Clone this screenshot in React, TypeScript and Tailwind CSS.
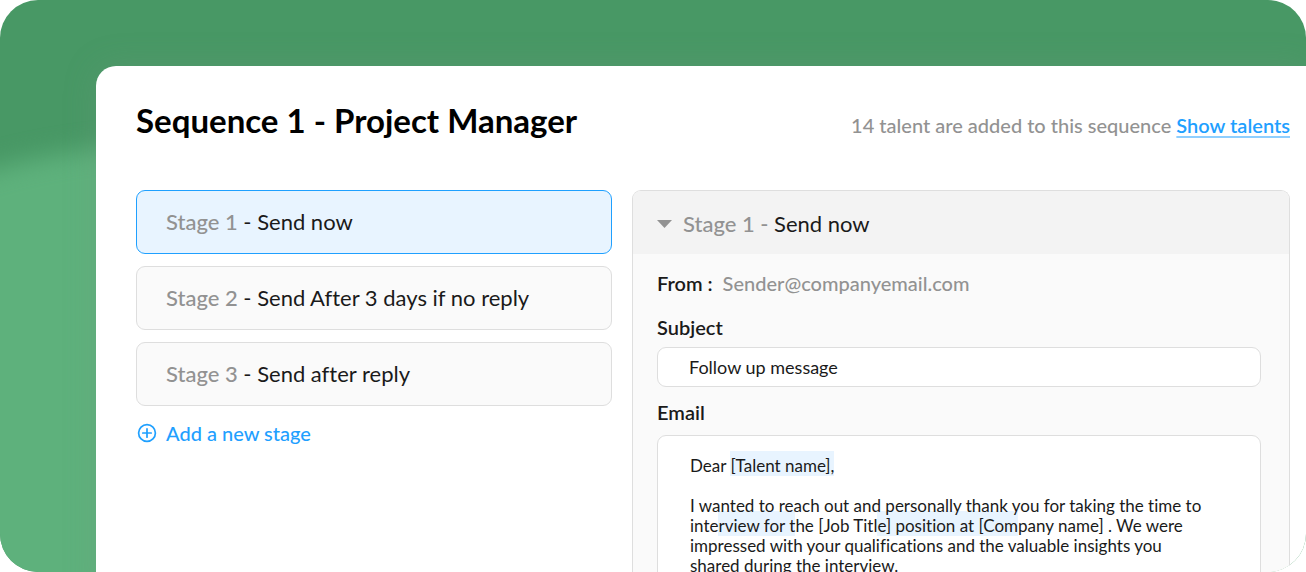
import { useState } from "react";

const stages = [
  { name: "Stage 1", action: "Send now" },
  { name: "Stage 2", action: "Send After 3 days if no reply" },
  { name: "Stage 3", action: "Send after reply" },
];

function StageList({ active, onSelect }: { active: number; onSelect: (index: number) => void }) {
  return (
    <div className="flex flex-col items-stretch">
      <ul className="flex flex-col gap-3">
        {stages.map((stage, index) => (
          <li key={stage.name}>
            <button
              type="button"
              aria-pressed={index === active}
              onClick={() => onSelect(index)}
              className={
                index === active
                  ? "h-16 w-full rounded-[9px] border border-[#1fa0ff] bg-[#e8f4ff] px-[29px] pb-0.5 text-left text-[22px]"
                  : "h-16 w-full rounded-[9px] border border-[#dedede] bg-[#fafafa] px-[29px] pb-0.5 text-left text-[22px]"
              }
            >
              <span className="font-medium text-[#929292]">{stage.name}</span> - {stage.action}
            </button>
          </li>
        ))}
      </ul>
      <button type="button" className="mt-[11px] flex h-8 items-center gap-2 self-start text-[20px] font-medium text-[#1fa0ff]">
        <svg viewBox="0 0 22 22" className="size-[22px]" fill="none" stroke="currentColor" strokeWidth="1.7" strokeLinecap="round" aria-hidden="true">
          <circle cx="11" cy="11" r="8.4" />
          <path d="M11 6.8v8.4M6.8 11h8.4" />
        </svg>
        Add a new stage
      </button>
    </div>
  );
}

function Highlight({ children }: { children: string }) {
  return (
    <span className="relative before:absolute before:inset-x-0 before:-top-1 before:bottom-0 before:-z-10 before:bg-[#e8f4ff]">
      {children}
    </span>
  );
}

function StageEditor() {
  return (
    <section className="overflow-hidden rounded-t-[9px] border border-b-0 border-[#dedede] bg-[#fafafa]">
      <h2 className="flex h-[63px] items-center gap-[11px] bg-[#f3f3f3] px-6 pt-0.5 text-[22px]">
        <svg viewBox="0 0 15 8" className="h-2 w-[15px]" fill="#929292" aria-hidden="true">
          <path d="M0 0h15L7.5 8z" />
        </svg>
        <span>
          <span className="font-medium text-[#929292]">Stage 1 -</span> Send now
        </span>
      </h2>
      <div className="px-6 pr-7 pt-[15px] text-[20px]">
        <p className="flex h-7 items-center gap-[10px]">
          <span className="font-semibold">From :</span>
          <span className="font-medium text-[#929292]">Sender@companyemail.com</span>
        </p>
        <label htmlFor="subject" className="mt-4 block leading-7 font-semibold">
          Subject
        </label>
        <input
          id="subject"
          defaultValue="Follow up message"
          className="mt-1.5 block h-10 w-full rounded-[9px] border border-[#dedede] bg-white px-[31px] text-[18px] outline-none"
        />
        <div id="email-label" className="mt-[11px] leading-7 font-semibold">
          Email
        </div>
        <div
          role="textbox"
          aria-multiline="true"
          aria-labelledby="email-label"
          contentEditable
          suppressContentEditableWarning
          className="isolate mt-[9px] flex flex-col gap-5 rounded-[9px] border border-[#dedede] bg-white px-8 py-5 text-[17px] leading-5 outline-none"
        >
          <p>
            Dear <Highlight>[Talent name],</Highlight>
          </p>
          <p>
            I wanted to reach out and personally thank you for taking the time to inte
            <Highlight>rview for t</Highlight>he [Job Titl<Highlight>e] position at [Com</Highlight>pany name] . We were
            <br />
            impressed with your qualifications and the valuable insights you
            <br />
            shared during the interview.
          </p>
        </div>
      </div>
    </section>
  );
}

export default function App() {
  const [active, setActive] = useState(0);
  return (
    <div className="relative isolate h-screen overflow-hidden rounded-[38px] bg-[#489865] pt-[66px] pl-24 font-['Lato','Liberation_Sans',sans-serif] text-[#1a1a1a] [font-variant-ligatures:no-common-ligatures]">
      <div className="absolute top-[144px] -left-[320px] -z-10 h-[700px] w-[1000px] rounded-[50%] bg-[#5eb17c] blur-[12px]" />
      <main className="min-h-full rounded-tl-[20px] bg-white pt-8 pr-4 pl-10 shadow-[0_0_32px_rgba(120,150,130,0.25)]">
        <header className="flex h-12 items-center justify-between">
          <h1 className="pb-0.5 text-[33px] font-bold text-black">Sequence 1 - Project Manager</h1>
          <p className="pt-1.5 text-[20px] font-medium text-[#929292]">
            14 talent are added to this sequence{" "}
            <a href="#talents" className="font-semibold text-[#1fa0ff] underline decoration-[#8fcfff] decoration-2 underline-offset-[3px]">
              Show talents
            </a>
          </p>
        </header>
        <div className="mt-11 grid grid-cols-[476fr_658fr] gap-5">
          <StageList active={active} onSelect={setActive} />
          <StageEditor />
        </div>
      </main>
    </div>
  );
}
